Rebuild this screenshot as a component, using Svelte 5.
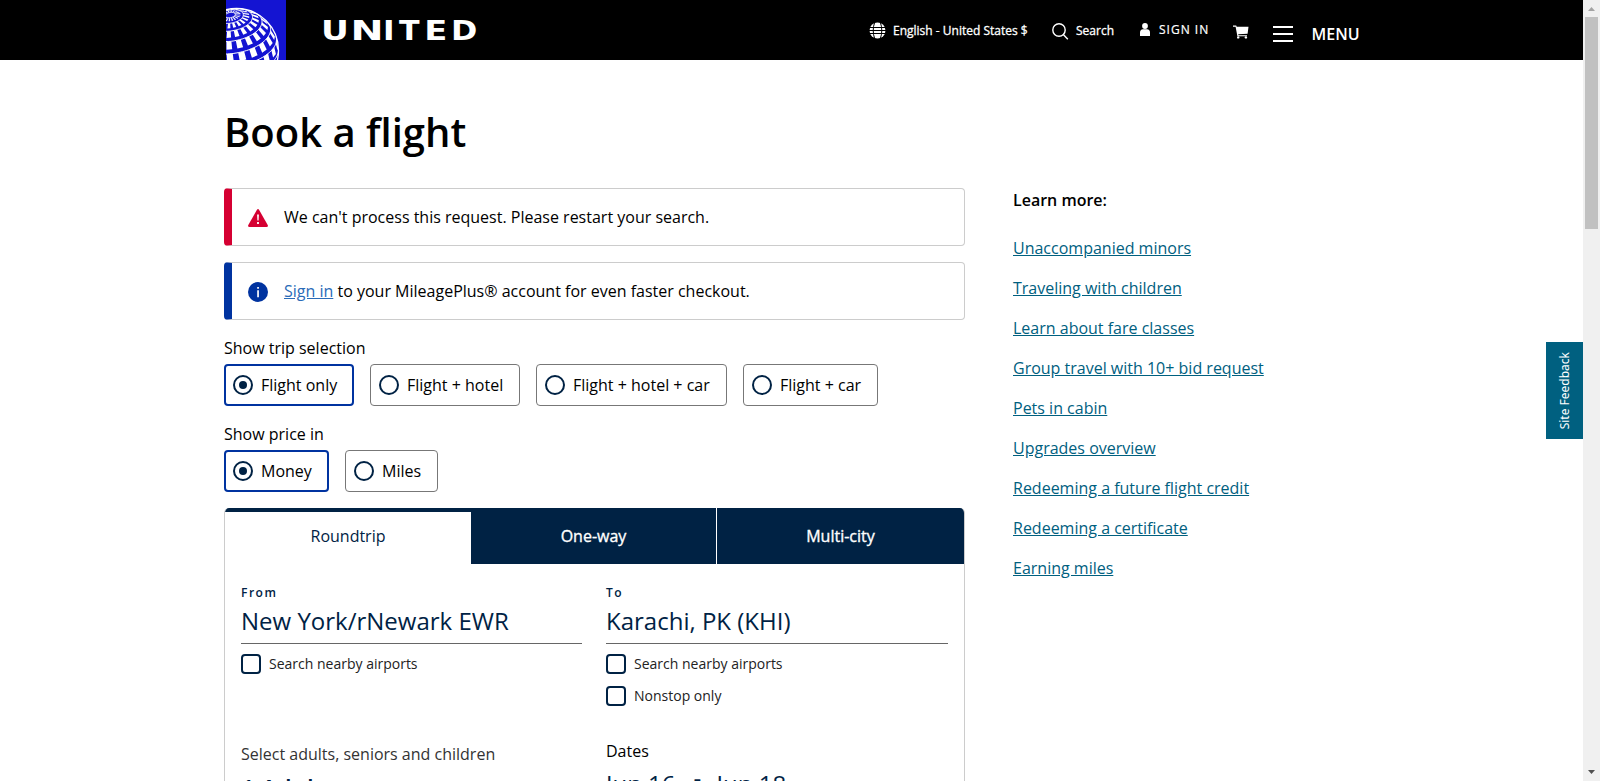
<script>
  const trips = ['Flight only', 'Flight + hotel', 'Flight + hotel + car', 'Flight + car'];
  const tripWidths = [130, 150, 191, 135];
  const prices = ['Money', 'Miles'];
  const priceWidths = [105, 93];
  const links = [
    'Unaccompanied minors', 'Traveling with children', 'Learn about fare classes',
    'Group travel with 10+ bid request', 'Pets in cabin', 'Upgrades overview',
    'Redeeming a future flight credit', 'Redeeming a certificate', 'Earning miles'
  ];
  // Wordmark letters: glyph, left offset, horizontal stretch.
  const letters = [['U', -1, 1.32], ['N', 28.4, 1.52], ['I', 61, 1.2], ['T', 77, 1.16], ['E', 102.2, 1.3], ['D', 129, 1.22]];
  let trip = $state(0);
  let price = $state(0);

  // Orthographic globe: colatitude and longitude around a tilted pole.
  const R = 42, CX = 10.5, CY = 50.5;
  const pole = [-0.15, 0.85, 0.505];
  const norm = (v) => { const l = Math.hypot(...v); return v.map((c) => c / l); };
  const cross = (a, b) => [a[1] * b[2] - a[2] * b[1], a[2] * b[0] - a[0] * b[2], a[0] * b[1] - a[1] * b[0]];
  const P = norm(pole);
  const U = norm(cross(P, [0, 0, 1]));
  const V = cross(P, U);
  function project(colat, lon) {
    const t = (colat * Math.PI) / 180, p = (lon * Math.PI) / 180;
    const k = [0, 1, 2].map((i) => P[i] * Math.cos(t) + Math.sin(t) * (U[i] * Math.cos(p) + V[i] * Math.sin(p)));
    return [CX + R * k[0], CY - R * k[1], k[2]];
  }
  const bands = [7, 18, 31, 46, 63, 81, 98];
  function arc(colat) {
    let d = '', pen = false;
    for (let l = 0; l <= 360; l += 3) {
      const [x, y, z] = project(colat, l);
      if (z < 0) { pen = false; continue; }
      d += `${pen ? 'L' : 'M'}${x.toFixed(1)} ${y.toFixed(1)}`;
      pen = true;
    }
    return d;
  }
  function blocks() {
    let d = '';
    for (let b = 0; b < bands.length - 1; b++) {
      const a = bands[b], e = a + (bands[b + 1] - a) * 0.66;
      for (let l = 2; l < 360; l += 18) {
        const q = [project(a, l), project(a, l + 9.5), project(e, l + 9.5), project(e, l)];
        if (q.some((p) => p[2] < 0)) continue;
        d += 'M' + q.map((p) => `${p[0].toFixed(1)} ${p[1].toFixed(1)}`).join('L') + 'Z';
      }
    }
    return d;
  }
  const arcs = bands.map(arc).join('');
  const tiles = blocks();
</script>

{#snippet choices(items, widths, selected, pick)}
  <div class="choices">
    {#each items as item, i}
      <button class="choice" class:on={selected === i} style="width:{widths[i]}px" onclick={() => pick(i)}>
        <span class="radio"></span><span>{item}</span>
      </button>
    {/each}
  </div>
{/snippet}

<div class="window">
  <div class="page">
    <header>
      <svg class="globe" width="60" height="60" viewBox="0 0 60 60">
        <rect width="60" height="60" fill="#1414d2" />
        <path d={tiles} fill="#fff" />
        <path d={arcs} fill="none" stroke="#fff" stroke-width="1" />
        <circle cx={CX} cy={CY} r={R} fill="none" stroke="#fff" stroke-width="1.3" />
      </svg>
      <svg class="wordmark" width="156" height="60" viewBox="0 0 156 60">
        {#each letters as [glyph, x, stretch]}
          <text transform="translate({x} 39.8) scale({stretch} 1)">{glyph}</text>
        {/each}
      </svg>
      <nav>
        <svg class="world" width="17" height="17" viewBox="0 0 17 17">
          <circle cx="8.5" cy="8.5" r="8" fill="#fff" />
          <path d="M0 5.5h17M0 8.5h17M0 11.5h17M5.8 0Q2.6 8.5 5.8 17M11.2 0Q14.4 8.5 11.2 17" fill="none" stroke="#000" stroke-width="1" />
        </svg>
        <span class="lang">English - United States $</span>
        <svg class="glass" width="17" height="17" viewBox="0 0 17 17" fill="none" stroke="#fff" stroke-width="1.4">
          <circle cx="7" cy="7" r="6.2" /><path d="M11.3 11.5l4.5 4.7" />
        </svg>
        <span class="search">Search</span>
        <svg class="person" width="10" height="14" viewBox="0 0 10 14" fill="#fff">
          <circle cx="5" cy="3" r="2.9" /><path d="M0 13V9.5Q0 6.5 3 6.3h4q3 .2 3 3.2V13z" />
        </svg>
        <span class="sign">SIGN IN</span>
        <svg class="cart" width="16" height="14" viewBox="0 0 16 14" fill="#fff">
          <path d="M0 .5h3.2l.5 1.3H15.5l-.9 6.9-9.4.5.3 1.1h8.5v1H4.4L2.6 1.7H0z" /><circle cx="5.2" cy="12.4" r="1.2" /><circle cx="12.9" cy="12.4" r="1.2" />
        </svg>
        <span class="bars"><i></i><i></i><i></i></span>
        <span class="menu">MENU</span>
      </nav>
    </header>

    <div class="body">
      <main>
        <h1>Book a flight</h1>
        <div class="alert error">
          <svg width="20" height="20" viewBox="0 0 20 20">
            <path d="M8.7 2.2Q10 0 11.3 2.2L19.7 17Q20.5 19 18.5 19H1.5Q-.5 19 .3 17Z" fill="#d50032" />
            <path d="M9.1 6.6h1.8l-.3 6H9.4zM9.1 14h1.8v1.9H9.1z" fill="#fff" />
          </svg>
          <p>We can't process this request. Please restart your search.</p>
        </div>
        <div class="alert info">
          <svg width="20" height="20" viewBox="0 0 20 20">
            <circle cx="10" cy="10" r="10" fill="#0033a0" />
            <path d="M9.2 5h1.7v1.8H9.2zM9.2 8.2h1.7v7H9.2z" fill="#fff" />
          </svg>
          <p><a href="#signin">Sign in</a> to your MileagePlus® account for even faster checkout.</p>
        </div>

        <div class="legend">Show trip selection</div>
        {@render choices(trips, tripWidths, trip, (i) => (trip = i))}
        <div class="legend">Show price in</div>
        {@render choices(prices, priceWidths, price, (i) => (price = i))}

        <section class="card">
          <div class="tabs">
            <div class="tab active">Roundtrip</div>
            <div class="tab">One-way</div>
            <div class="tab">Multi-city</div>
          </div>
          <div class="fields">
            <div class="col">
              <div class="label">From</div>
              <div class="value">New York/rNewark EWR</div>
              <div class="check"><i></i>Search nearby airports</div>
              <div class="caption travelers">Select adults, seniors and children</div>
              <div class="big adult">1 Adult</div>
            </div>
            <div class="col">
              <div class="label">To</div>
              <div class="value">Karachi, PK (KHI)</div>
              <div class="check"><i></i>Search nearby airports</div>
              <div class="check"><i></i>Nonstop only</div>
              <div class="caption dates">Dates</div>
              <div class="big range"><span>Jun 16</span><b>-</b><span>Jun 18</span></div>
            </div>
          </div>
        </section>
      </main>
      <aside>
        <h2>Learn more:</h2>
        {#each links as link}<div class="link"><a href="#more">{link}</a></div>{/each}
      </aside>
    </div>
    <div class="feedback"><span>Site Feedback</span></div>
  </div>
  <div class="scrollbar">
    <svg width="17" height="17" viewBox="0 0 17 17"><path d="M5 11l3.5-4 3.5 4z" fill="#a3a3a3" /></svg>
    <div class="thumb"></div>
    <svg class="down" width="17" height="17" viewBox="0 0 17 17"><path d="M5 6l3.5 4L12 6z" fill="#505050" /></svg>
  </div>
</div>

<style>
  :global(body) { margin: 0; overflow: hidden; }
  * { box-sizing: border-box; }
  .window { display: flex; width: 1600px; height: 781px; overflow: hidden; background: #fff; font: 16px/24px "Open Sans", sans-serif; color: #000; }
  .page { position: relative; width: 1583px; height: 781px; overflow: hidden; }
  header { display: flex; height: 60px; padding-left: 226px; background: #000; color: #fff; }
  svg { display: block; flex: none; }
  .wordmark { margin-left: 36px; }
  .wordmark text { font: bold 26px "DejaVu Sans", sans-serif; fill: #fff; }
  nav { display: flex; align-items: flex-start; margin-left: 391px; white-space: nowrap; }
  nav span { flex: none; }
  .world { margin-top: 22px; }
  .lang { margin: 19px 0 0 7px; width: 135px; font-size: 12px; -webkit-text-stroke: .3px; }
  .glass { margin: 23px 0 0 24px; }
  .search { margin: 19px 0 0 7px; width: 40px; font-size: 12px; -webkit-text-stroke: .3px; }
  .person { margin: 23px 0 0 24px; }
  .sign { margin: 18px 0 0 9px; width: 51px; font-size: 12px; letter-spacing: 1px; -webkit-text-stroke: .2px; }
  .cart { margin: 25px 0 0 23px; }
  .bars { display: flex; flex-direction: column; gap: 5px; width: 20px; margin: 26px 0 0 24px; }
  .bars i { height: 2px; background: #fff; }
  .menu { margin: 22px 0 0 18.5px; font-weight: 600; }
  .body { display: flex; padding-left: 224px; gap: 48px; }
  main { width: 741px; }
  h1 { margin: 44px 0 28px; height: 56px; font-size: 40px; line-height: 56px; font-weight: 600; white-space: nowrap; }
  .alert { display: flex; align-items: center; height: 58px; margin-bottom: 16px; padding-left: 16px; border: 1px solid #ccc; border-left: 8px solid #d50032; border-radius: 4px; }
  .alert.info { border-left-color: #0033a0; }
  .alert svg { margin-top: 2px; }
  .alert p { margin: 0 0 0 16px; white-space: nowrap; }
  .alert a { color: #2b6cb8; }
  .legend { height: 24px; margin-bottom: 4px; }
  .choices { display: flex; gap: 16px; margin-bottom: 16px; }
  .choice { display: flex; align-items: center; height: 42px; padding: 0 0 0 8px; border: 1px solid #777; border-radius: 4px; background: #fff; font: inherit; color: inherit; white-space: nowrap; }
  .choice.on { padding-left: 7px; border: 2px solid #0033a0; }
  .radio { display: flex; align-items: center; justify-content: center; flex: none; width: 20px; height: 20px; margin-right: 8px; border: 2px solid #002244; border-radius: 50%; }
  .on .radio::after { content: ''; width: 8px; height: 8px; border-radius: 50%; background: #002244; }
  .card { height: 400px; border: 1px solid #ccc; border-top: 0; border-radius: 5px 5px 0 0; overflow: hidden; }
  .tabs { display: grid; grid-template-columns: 246px 245px 248px; height: 56px; }
  .tab { display: flex; align-items: center; justify-content: center; background: #024; color: #fff; -webkit-text-stroke: .35px; }
  .tab + .tab + .tab { border-left: 1px solid #fff; }
  .tab.active { background: #fff; color: #024; border-top: 4px solid #024; padding-bottom: 4px; -webkit-text-stroke: 0; }
  .fields { display: grid; grid-template-columns: 341px 342px; gap: 24px; padding: 19px 16px 0; }
  .label { height: 20px; font-size: 12px; line-height: 20px; font-weight: 600; letter-spacing: 1.5px; color: #024; }
  .value { height: 41px; border-bottom: 1px solid #666; font-size: 24px; line-height: 36px; color: #024; white-space: nowrap; }
  .check { display: flex; align-items: center; height: 20px; margin: 10px 0 12px; font-size: 14px; color: #222; }
  .check + .check { margin-top: 0; }
  .check i { width: 20px; height: 20px; margin-right: 8px; border: 2px solid #024; border-radius: 4px; }
  .travelers { margin-top: 68px; color: #333; }
  .dates { margin-top: 33px; }
  .big { height: 36px; font-size: 24px; line-height: 36px; color: #024; white-space: nowrap; }
  .adult { font-weight: 600; margin-top: 4px; }
  .range { display: flex; margin-top: 3px; }
  .range b { width: 23px; margin: -6px 0 0 18px; font-weight: 400; }
  aside { padding-top: 128px; white-space: nowrap; }
  h2 { margin: 0 0 24px; font-size: 16px; line-height: 24px; font-weight: 600; }
  .link { height: 24px; margin-bottom: 16px; }
  .link a { color: #00607f; }
  .feedback { position: absolute; right: 0; top: 342px; display: flex; align-items: center; justify-content: center; width: 37px; height: 97px; background: #006080; color: #fff; }
  .feedback span { writing-mode: vertical-rl; transform: rotate(180deg); font: 12px/16px "Noto Sans", sans-serif; white-space: nowrap; }
  .scrollbar { display: flex; flex-direction: column; align-items: center; width: 17px; height: 781px; background: #f0f0f0; }
  .thumb { width: 13px; height: 212px; background: #c1c1c1; }
  .down { margin-top: auto; }
</style>
